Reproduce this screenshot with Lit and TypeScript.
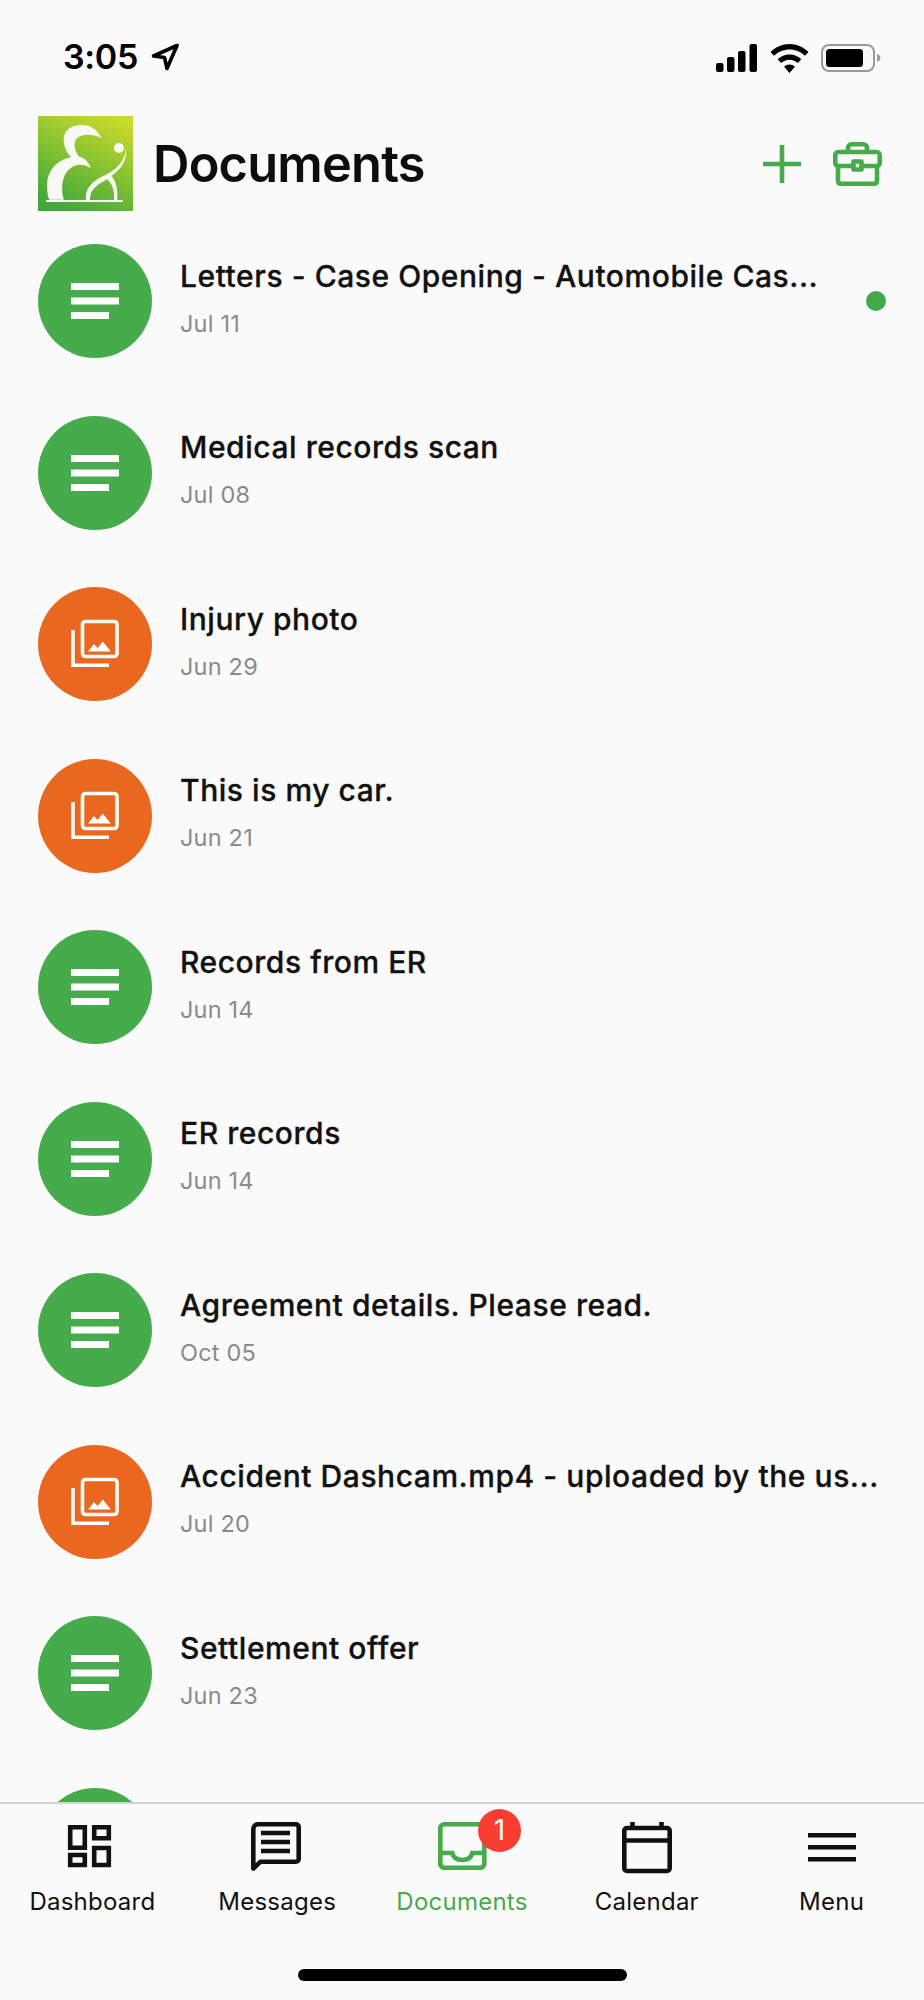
import { LitElement, css, html, svg } from "lit";
import { customElement } from "lit/decorators.js";

type Doc = { title: string; date: string; kind: "doc" | "image"; unread?: boolean };

const DOCS: Doc[] = [
  { title: "Letters - Case Opening - Automobile Cas...", date: "Jul 11", kind: "doc", unread: true },
  { title: "Medical records scan", date: "Jul 08", kind: "doc" },
  { title: "Injury photo", date: "Jun 29", kind: "image" },
  { title: "This is my car.", date: "Jun 21", kind: "image" },
  { title: "Records from ER", date: "Jun 14", kind: "doc" },
  { title: "ER records", date: "Jun 14", kind: "doc" },
  { title: "Agreement details. Please read.", date: "Oct 05", kind: "doc" },
  { title: "Accident Dashcam.mp4 - uploaded by the us...", date: "Jul 20", kind: "image" },
  { title: "Settlement offer", date: "Jun 23", kind: "doc" },
  { title: "", date: "", kind: "doc" },
];

const docIcon = svg`
  <path d="M33 39h48v7H33zM33 53.5h48v7H33zM33 68h38v7H33z" fill="#fff" />
`;

const imageIcon = svg`
  <rect x="44.5" y="34.5" width="34.5" height="35" rx="3" fill="none" stroke="#fff" stroke-width="3.6" />
  <path d="M35 43v35.2h36" fill="none" stroke="#fff" stroke-width="3.6" />
  <path d="M50 64.5l6-7.5 3.6 4 5.2-6.6 8 10.1z" fill="#fff" />
`;

const TABS = [
  {
    label: "Dashboard",
    icon: svg`<path d="M72.2 1829.2h14.6v20.6h-14.6zM96.2 1829.2h14.6v11h-14.6zM72.2 1857h14.6v10h-14.6zM96.2 1850h14.6v17h-14.6z" transform="translate(-68 -1824)" fill="none" stroke="currentColor" stroke-width="4.6" />`,
  },
  {
    label: "Messages",
    icon: svg`
      <path d="M7 2.3h38c1.5 0 2.7 1.2 2.7 2.7v32c0 1.500-1.200 2.700-2.700 2.700H9.500L2.300 46.500V7C2.300 4.400 4.400 2.300 7 2.300z" fill="none" stroke="currentColor" stroke-width="4.6" stroke-linejoin="round" />
      <path d="M10 11h29M10 20h29M10 29h29" stroke="currentColor" stroke-width="4.4" fill="none" />`,
  },
  {
    label: "Documents",
    active: true,
    icon: svg`
      <g transform="translate(2 0)">
        <rect x="2.300" y="2.300" width="44" height="43.500" rx="4" fill="none" stroke="currentColor" stroke-width="4.600" />
        <path d="M2.300 31h12c1 5 4 7 10 7s9-2 10-7h12" fill="none" stroke="currentColor" stroke-width="4.600" />
      </g>`,
  },
  {
    label: "Calendar",
    icon: svg`
      <path d="M6 6h40c1.500 0 2.700 1.200 2.700 2.700v37.600c0 1.500-1.200 2.700-2.700 2.700H6c-1.500 0-2.700-1.200-2.700-2.700V8.700C3.300 7.200 4.500 6 6 6z" fill="none" stroke="currentColor" stroke-width="4.600" />
      <path d="M3.300 18.500h45.400M11.500 0v6M40.500 0v6" fill="none" stroke="currentColor" stroke-width="4.600" />`,
  },
  {
    label: "Menu",
    icon: svg`<path d="M2 13.300h48M2 25.300h48M2 37.300h48" fill="none" stroke="currentColor" stroke-width="4.500" />`,
  },
];

@customElement("app-root")
export class AppRoot extends LitElement {
  static styles = css`
    :host {
      display: flex;
      flex-direction: column;
      height: 2000px;
      overflow: hidden;
      background: #fafafa;
      color: #0d0d0d;
      font-family: Inter, "Liberation Sans", sans-serif;
    }

    .status {
      flex: none;
      display: flex;
      align-items: center;
      justify-content: space-between;
      height: 116px;
      padding: 0 43px 0 63px;
      box-sizing: border-box;
    }

    .time {
      display: flex;
      align-items: center;
      gap: 13px;
      font-size: 34px;
      line-height: 34px;
      font-weight: 600;
      color: #000;
      letter-spacing: -0.3px;
      padding-bottom: 2px;
    }

    .status-icons {
      display: flex;
      align-items: center;
      gap: 13px;
    }

    .status-icons .wifi {
      margin-right: -1px;
      margin-left: -1px;
    }

    .header {
      flex: none;
      display: flex;
      align-items: center;
      height: 95px;
      padding: 0 42px 0 38px;
    }

    .logo {
      width: 95px;
      height: 95px;
      flex: none;
    }

    h1 {
      flex: 1;
      margin: 2px 0 0 20px;
      font-size: 50.5px;
      font-weight: 600;
      letter-spacing: -0.8px;
      line-height: 1;
    }

    .actions {
      display: flex;
      align-items: center;
      gap: 32px;
    }

    .list {
      flex: 1;
      min-height: 0;
      overflow: hidden;
      display: flex;
      flex-direction: column;
      gap: 57.5px;
      padding: 33px 38px 0;
    }

    .row {
      flex: none;
      display: flex;
      align-items: center;
      height: 114px;
      position: relative;
    }

    .avatar {
      flex: none;
      width: 114px;
      height: 114px;
      display: block;
    }

    .text {
      margin-left: 28px;
      min-width: 0;
      white-space: nowrap;
    }

    .title {
      font-size: 30px;
      font-weight: 500;
      line-height: 36px;
      height: 36px;
      margin-top: -7px;
      color: #111;
      letter-spacing: 0.55px;
      -webkit-text-stroke: 0.3px #111;
    }

    .date {
      margin-top: 16px;
      font-size: 23.5px;
      line-height: 28px;
      color: #8a8a8a;
      letter-spacing: 0.2px;
    }

    .dot {
      position: absolute;
      right: 0;
      top: 47px;
      width: 20px;
      height: 20px;
      border-radius: 50%;
      background: #43a94a;
    }

    .tabbar {
      flex: none;
      height: 198px;
      border-top: 2px solid #d2d2d2;
      box-sizing: border-box;
      background: #fafafa;
      position: relative;
      display: grid;
      grid-template-columns: repeat(5, 1fr);
      z-index: 1;
    }

    .tab {
      display: flex;
      flex-direction: column;
      align-items: center;
      padding-top: 18px;
      font-size: 24px;
      line-height: 28px;
      font-weight: 400;
      letter-spacing: 0.25px;
      color: #111;
    }

    .tab.active {
      color: #46ab4d;
    }

    .tab-icon {
      position: relative;
      width: 52px;
      height: 52px;
    }

    .tab-icon svg {
      display: block;
      overflow: visible;
    }

    .tab span {
      margin-top: 14px;
    }

    .badge {
      position: absolute;
      left: 42px;
      top: -13px;
      width: 43px;
      height: 43px;
      border-radius: 50%;
      background: #fb3c30;
      color: #fff;
      font-size: 28px;
      line-height: 43px;
      text-align: center;
    }

    .home {
      position: absolute;
      left: 298px;
      top: 165px;
      width: 329px;
      height: 12px;
      border-radius: 6px;
      background: #000;
    }
  `;

  private renderLogo() {
    return html`
      <svg class="logo" viewBox="0 0 285 285">
        <defs>
          <linearGradient id="logo-bg" x1="0.75" y1="0" x2="0.3" y2="1">
            <stop offset="0" stop-color="#c8da2c" />
            <stop offset="1" stop-color="#3fa83a" />
          </linearGradient>
        </defs>
        <rect width="285" height="285" fill="url(#logo-bg)" />
        <g fill="#f7f9f2">
          <path d="M191 66C176 40 158 27 131 27C98 27 77 44 77 70C77 90 86 112 100 123C55 132 27 165 27 210C27 226 29 242 34 251H78C72 236 71 218 74 198C79 170 96 152 118 147C132 144 146 148 158 156C152 136 140 126 124 122C112 108 106 88 112 74C118 58 150 48 191 66Z" />
          <circle cx="243" cy="96" r="15" />
          <path d="M262 90C268 125 240 160 200 178C165 195 140 215 144 254H156C155 225 170 210 207 190C225 205 230 230 228 254H238C240 225 235 195 220 180C250 160 272 130 262 90Z" />
          <rect x="24" y="252" width="230" height="6" />
        </g>
      </svg>
    `;
  }

  private renderRow(doc: Doc) {
    const fill = doc.kind === "doc" ? "#46ab4b" : "#ea671f";
    return html`
      <div class="row">
        <svg class="avatar" viewBox="0 0 114 114">
          <circle cx="57" cy="57" r="57" fill=${fill} />
          ${doc.kind === "doc" ? docIcon : imageIcon}
        </svg>
        <div class="text">
          <div class="title">${doc.title}</div>
          <div class="date">${doc.date}</div>
        </div>
        ${doc.unread ? html`<div class="dot"></div>` : null}
      </div>
    `;
  }

  render() {
    return html`
      <div class="status">
        <div class="time">
          3:05
          <svg width="28" height="28" viewBox="0 0 28 28">
            <path d="M26 2.500L2.500 13l11 1.500L16 25.500z" fill="none" stroke="#000" stroke-width="3.600" stroke-linejoin="round" />
          </svg>
        </div>
        <div class="status-icons">
          <svg width="42" height="28" viewBox="0 0 42 28">
            <rect x="0" y="19" width="7.500" height="9" rx="2" />
            <rect x="11" y="13" width="7.500" height="15" rx="2" />
            <rect x="22" y="7" width="7.500" height="21" rx="2" />
            <rect x="33.500" y="0" width="7.500" height="28" rx="2" />
          </svg>
          <svg class="wifi" width="39" height="29" viewBox="0 0 39 29">
            <path d="M19.500 0C27 0 33.500 3 38.500 8l-3.500 3.800C31 7.900 25.600 5.500 19.500 5.500S8 7.900 4 11.800L.5 8C5.500 3 12 0 19.500 0z" />
            <path d="M19.500 10.500c4.600 0 8.700 1.800 11.800 4.800l-3.500 3.800c-2.200-2.100-5.100-3.400-8.300-3.400s-6.100 1.300-8.300 3.400l-3.500-3.800c3.100-3 7.200-4.800 11.800-4.800z" />
            <path d="M19.500 20.500c2.100 0 4 .8 5.400 2.200L19.500 29l-5.400-6.300c1.400-1.400 3.300-2.200 5.400-2.200z" />
          </svg>
          <svg width="60" height="28" viewBox="0 0 60 28">
            <rect x="1" y="1" width="52" height="26" rx="7" fill="none" stroke="#9a9a9a" stroke-width="2" />
            <rect x="5" y="5" width="37" height="18" rx="3.500" />
            <path d="M56 10c2 .8 3.500 2 3.500 4s-1.500 3.200-3.500 4z" fill="#9a9a9a" />
          </svg>
        </div>
      </div>
      <div class="header">
        ${this.renderLogo()}
        <h1>Documents</h1>
        <div class="actions">
          <svg width="38" height="38" viewBox="0 0 38 38">
            <path d="M19 0v38M0 19h38" stroke="#46ab4b" stroke-width="4.600" fill="none" />
          </svg>
          <svg width="49" height="44" viewBox="0 0 49 44">
            <g fill="none" stroke="#46ab4b" stroke-width="4.600" stroke-linejoin="round">
              <path d="M15 10V6c0-2 1.500-3.700 3.700-3.700h11.600C32.500 2.300 34 4 34 6v4" />
              <rect x="2.300" y="10" width="44.400" height="14" rx="3" />
              <path d="M5 24v14.500c0 2 1.200 3.200 3.200 3.200h32.600c2 0 3.200-1.200 3.200-3.200V24" />
              <rect x="20.500" y="19.500" width="8" height="8" fill="#fafafa" />
            </g>
          </svg>
        </div>
      </div>
      <div class="list">${DOCS.map((doc) => this.renderRow(doc))}</div>
      <div class="tabbar">
        ${TABS.map(
          (tab) => html`
            <div class="tab ${tab.active ? "active" : ""}">
              <div class="tab-icon">
                <svg width="52" height="52" viewBox="0 0 52 52">${tab.icon}</svg>
                ${tab.active ? html`<div class="badge">1</div>` : null}
              </div>
              <span>${tab.label}</span>
            </div>
          `,
        )}
        <div class="home"></div>
      </div>
    `;
  }
}
